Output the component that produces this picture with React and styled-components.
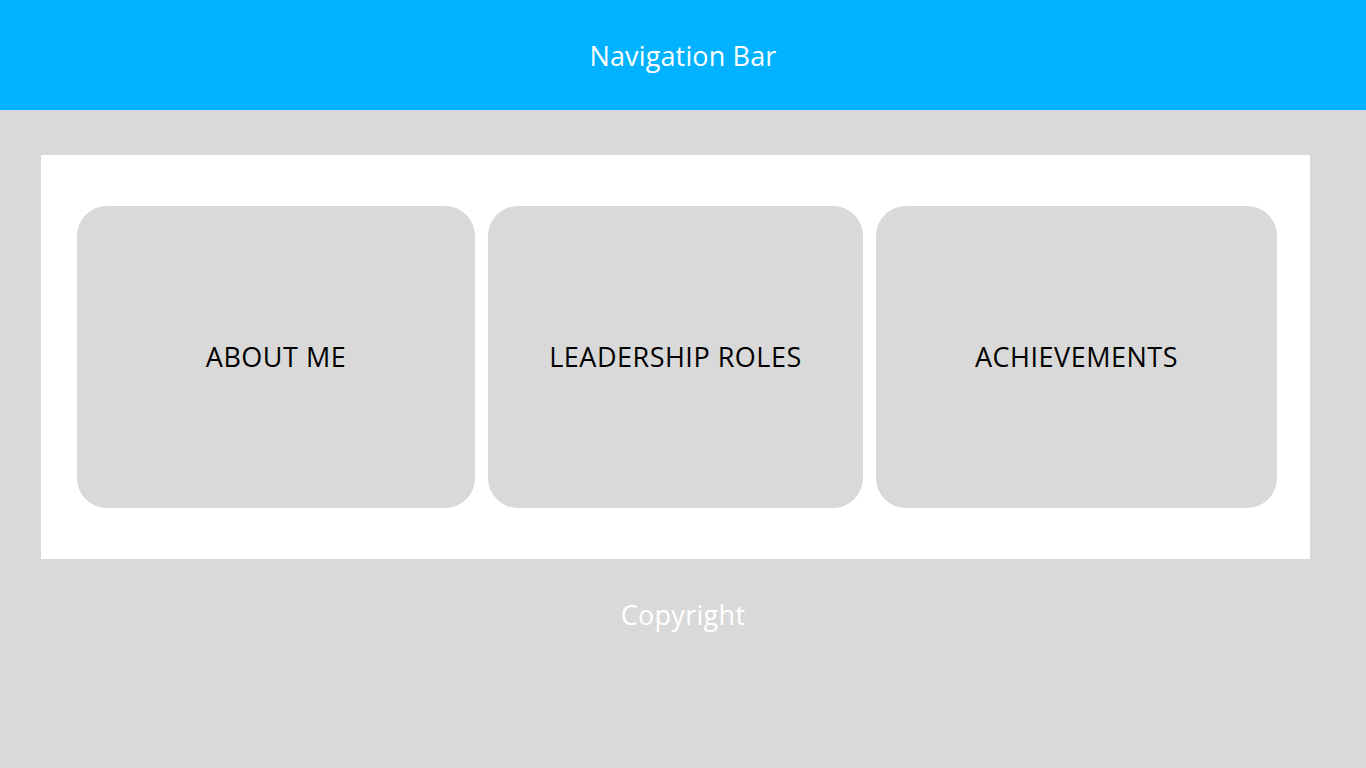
import React from 'react';
import styled, { createGlobalStyle } from 'styled-components';

const GlobalStyle = createGlobalStyle`
  html, body {
    margin: 0;
    padding: 0;
    background: #d9d9d9;
    font-family: "Open Sans", "Noto Sans", sans-serif;
  }
`;

const Page = styled.div`
  min-height: 768px;
  display: flex;
  flex-direction: column;
  background-color: #d9d9d9;
`;

const NavBar = styled.header`
  height: 110px;
  display: flex;
  align-items: center;
  justify-content: center;
  background-color: #00b2ff;
  color: #ffffff;
  font-size: 27px;
  letter-spacing: 0.15px;
`;

const Main = styled.main`
  padding: 45px 56px 0 41px;
`;

const Panel = styled.section`
  display: grid;
  grid-template-columns: 398fr 375fr 401fr;
  gap: 13px;
  padding: 51px 33px 51px 36px;
  background-color: #ffffff;
`;

const Card = styled.div`
  height: 302px;
  display: flex;
  align-items: center;
  justify-content: center;
  padding-bottom: 2px;
  box-sizing: border-box;
  border-radius: 30px;
  background-color: #d9d9d9;
  color: #000000;
  font-size: 27px;
  letter-spacing: 0.5px;
`;

const Footer = styled.footer`
  height: 110px;
  display: flex;
  align-items: center;
  justify-content: center;
  color: #ffffff;
  font-size: 27px;
  letter-spacing: 0.3px;
  padding-bottom: 2px;
`;

const sections = ['ABOUT ME', 'LEADERSHIP ROLES', 'ACHIEVEMENTS'];

const App = () => {
  return (
    <>
      <GlobalStyle />
      <Page>
        <NavBar>Navigation Bar</NavBar>
        <Main>
          <Panel>
            {sections.map((title) => (
              <Card key={title}>{title}</Card>
            ))}
          </Panel>
        </Main>
        <Footer>Copyright</Footer>
      </Page>
    </>
  );
};

export default App;
